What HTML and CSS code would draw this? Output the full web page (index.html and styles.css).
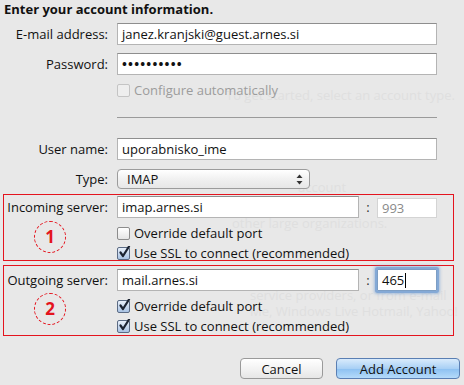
FILE: index.html
```html
<!DOCTYPE html>
<html>
<head>
    <meta charset="UTF-8">
    <title>Account information</title>
    <link rel="stylesheet" href="styles.css">
</head>
<body>
    <div class="ghost">
        <div class="ghost-line g1">To get started, select an account type.</div>
        <div class="ghost-line g2">account</div>
        <div class="ghost-line g3">other large organizations.</div>
        <div class="ghost-line g4">service providers, or from e-mail</div>
        <div class="ghost-line g5">Me, Windows Live Hotmail, Yahoo!</div>
    </div>

    <div class="page">
        <div class="title">Enter your account information.</div>

        <div class="row first">
            <label class="label">E-mail address:</label>
            <div class="input wide">janez.kranjski@guest.arnes.si</div>
        </div>

        <div class="row gap8">
            <label class="label">Password:</label>
            <div class="input wide dots">&bull;&bull;&bull;&bull;&bull;&bull;&bull;&bull;&bull;&bull;</div>
        </div>

        <div class="check-row configure">
            <span class="box disabled"></span>
            <span class="check-text muted">Configure automatically</span>
        </div>

        <div class="separator"></div>

        <div class="row user">
            <label class="label">User name:</label>
            <div class="input wide">uporabnisko_ime</div>
        </div>

        <div class="row type">
            <label class="label">Type:</label>
            <div class="select">
                <span>IMAP</span>
                <svg class="arrows" width="7" height="11" viewBox="0 0 7 11">
                    <path d="M3.5 0.5 L6.5 4 L0.5 4 Z" fill="#333"/>
                    <path d="M3.5 10.5 L6.5 7 L0.5 7 Z" fill="#333"/>
                </svg>
            </div>
        </div>

        <div class="server incoming">
            <div class="row in-first">
                <label class="label">Incoming server:</label>
                <div class="input host">imap.arnes.si</div>
                <span class="colon">:</span>
                <div class="input port idle">993</div>
            </div>
            <div class="check-row opt">
                <span class="box"></span>
                <span class="check-text">Override default port</span>
            </div>
            <div class="check-row opt2">
                <span class="box checked">
                    <svg width="13" height="13" viewBox="0 0 13 13"><path d="M2.5 6.5 L5 10 L11 0.5" stroke="#1c2433" stroke-width="2.2" fill="none" stroke-linecap="round" stroke-linejoin="round"/></svg>
                </span>
                <span class="check-text">Use SSL to connect (recommended)</span>
            </div>
            <div class="mark">1</div>
        </div>

        <div class="server outgoing">
            <div class="row out-first">
                <label class="label">Outgoing server:</label>
                <div class="input host">mail.arnes.si</div>
                <span class="colon">:</span>
                <div class="input port focus">465<span class="caret"></span></div>
            </div>
            <div class="check-row opt">
                <span class="box checked">
                    <svg width="13" height="13" viewBox="0 0 13 13"><path d="M2.5 6.5 L5 10 L11 0.5" stroke="#1c2433" stroke-width="2.2" fill="none" stroke-linecap="round" stroke-linejoin="round"/></svg>
                </span>
                <span class="check-text">Override default port</span>
            </div>
            <div class="check-row opt2">
                <span class="box checked">
                    <svg width="13" height="13" viewBox="0 0 13 13"><path d="M2.5 6.5 L5 10 L11 0.5" stroke="#1c2433" stroke-width="2.2" fill="none" stroke-linecap="round" stroke-linejoin="round"/></svg>
                </span>
                <span class="check-text">Use SSL to connect (recommended)</span>
            </div>
            <div class="mark">2</div>
        </div>

        <div class="buttons">
            <button class="btn">Cancel</button>
            <button class="btn primary">Add Account</button>
        </div>
    </div>
</body>
</html>
```

FILE: styles.css
```css
* {
    box-sizing: border-box;
}

body {
    margin: 0;
    background: #e8e8e8;
    font-family: 'Open Sans', sans-serif;
    font-size: 13px;
    color: #111;
    position: relative;
    width: 464px;
    height: 385px;
    overflow: hidden;
}

/* faded page of the assistant behind the sheet */
.ghost {
    position: absolute;
    top: 0;
    left: 0;
    width: 464px;
    height: 385px;
    z-index: 0;
    color: #dfdfdf;
    overflow: hidden;
}

.ghost-line {
    position: absolute;
    white-space: nowrap;
}

.g1 { top: 86px; left: 226px; }
.g2 { top: 178px; left: 298px; }
.g3 { top: 214px; left: 232px; }
.g4 { top: 286px; left: 250px; }
.g5 { top: 302px; left: 250px; }

.page {
    position: relative;
    z-index: 1;
}

.title {
    margin-left: 4px;
    height: 19px;
    line-height: 18px;
    font-weight: bold;
    font-size: 13px;
}

.row {
    display: flex;
    align-items: center;
    height: 22px;
}

.first { margin-top: 4px; }
.gap8 { margin-top: 8px; }
.user { margin-top: 20px; }
.type { margin-top: 9px; height: 20px; }

.label {
    width: 109px;
    padding-right: 1px;
    margin-right: 8px;
    text-align: right;
    white-space: nowrap;
}

.server .label {
    width: 105px;
}

.input {
    height: 22px;
    background: #fff;
    border: 1px solid #b4b4b4;
    border-top-color: #8e8e8e;
    padding: 0 4px;
    line-height: 20px;
    white-space: nowrap;
    overflow: hidden;
}

.wide {
    width: 320px;
}

.dots {
    font-size: 13px;
    font-weight: bold;
    letter-spacing: 1.2px;
}

.host {
    width: 242px;
}

.colon {
    width: 18px;
    text-align: center;
    color: #333;
}

.port {
    width: 60px;
}

.port.idle {
    height: 20px;
    line-height: 18px;
    margin-top: 2px;
    border-color: #d4d4d4;
    color: #8a8a8a;
}

.port.focus {
    border-color: #7d9ec4;
    box-shadow: 0 0 0 2px #84a9d6, 0 0 3px 3px rgba(100, 150, 210, 0.5);
    border-radius: 1px;
}

.caret {
    display: inline-block;
    width: 1px;
    height: 15px;
    background: #000;
    vertical-align: -3px;
    margin-left: 1px;
}

.check-row {
    display: flex;
    align-items: center;
    height: 14px;
    padding-left: 117px;
}

.server .check-row {
    padding-left: 113px;
}

.configure { margin-top: 8px; }

.box {
    width: 13px;
    height: 13px;
    border: 1px solid #8c8c8c;
    border-radius: 2px;
    background: linear-gradient(#ffffff, #e4e4e4);
    margin-right: 4px;
    position: relative;
    flex-shrink: 0;
}

.box svg {
    position: absolute;
    left: 0;
    top: -2px;
}

.box.checked {
    border-color: #5b6b84;
    background: linear-gradient(#e8f0fb, #a9c3e4);
}

.box.disabled {
    border-color: #c4c4c4;
    background: #eeeeee;
}

.check-text {
    white-space: nowrap;
}

.muted {
    color: #9c9c9c;
}

.separator {
    margin: 20px 0 0 117px;
    width: 320px;
    height: 1px;
    background: #9a9a9a;
}

.select {
    width: 193px;
    height: 20px;
    border: 1px solid #9c9c9c;
    border-radius: 4px;
    background: linear-gradient(#ffffff, #f1f1f1 50%, #e7e7e7);
    display: flex;
    align-items: center;
    justify-content: space-between;
    padding: 0 6px 0 9px;
}

.server {
    position: relative;
    margin-left: 3px;
    width: 451px;
    border: 1px solid #e4141e;
}

.incoming {
    margin-top: 5px;
    height: 67px;
}

.outgoing {
    margin-top: 4px;
    height: 71px;
}

.in-first { margin-top: 1px; }
.out-first { margin-top: 3px; }

.server .opt { margin-top: 8px; }
.server .opt2 { margin-top: 6px; }

.mark {
    position: absolute;
    width: 32px;
    height: 32px;
    border: 1px dashed #e4141e;
    border-radius: 50%;
    color: #e4141e;
    font-weight: bold;
    font-size: 17px;
    text-align: center;
    line-height: 30px;
}

.incoming .mark { left: 30px; top: 26px; }
.outgoing .mark { left: 30px; top: 27px; }

.buttons {
    margin-top: 22px;
    display: flex;
    justify-content: flex-end;
    gap: 13px;
    padding-right: 4px;
}

.btn {
    height: 21px;
    border: 1px solid #9a9a9a;
    border-radius: 4px;
    background: linear-gradient(#ffffff, #f3f3f3 50%, #e6e6e6);
    font-family: 'Open Sans', sans-serif;
    font-size: 13px;
    color: #111;
    padding: 0;
    width: 83px;
}

.btn.primary {
    width: 124px;
    border-color: #5a7fb3;
    background: linear-gradient(#d9ebfc, #a9d0f5 50%, #8cc0f1 51%, #b5dbfa);
}
```
